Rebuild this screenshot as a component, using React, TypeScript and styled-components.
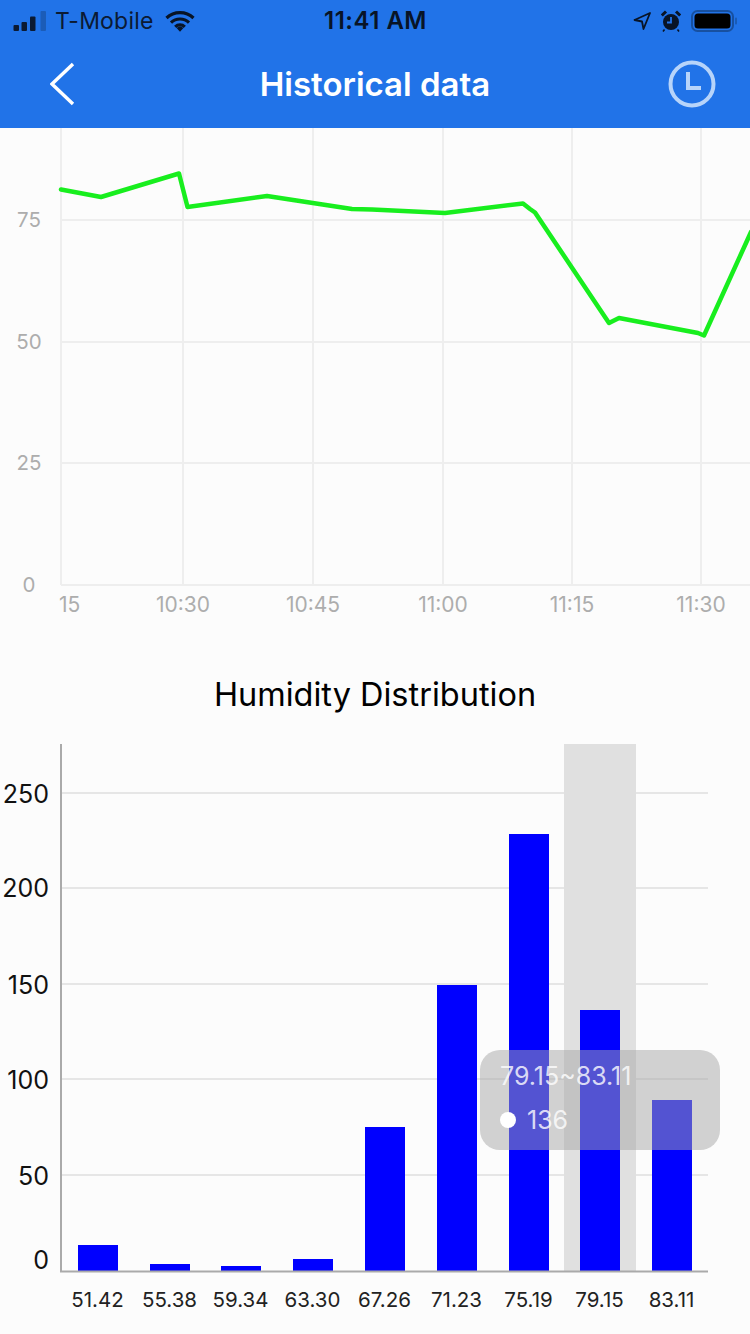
import styled, { createGlobalStyle } from "styled-components";

const GlobalStyle = createGlobalStyle`
  html, body {
    margin: 0;
    padding: 0;
    background: #fcfcfc;
    font-family: Inter, "Liberation Sans", sans-serif;
  }
`;

const lineXTicks = [
  { x: 183, label: "10:30" },
  { x: 313, label: "10:45" },
  { x: 443, label: "11:00" },
  { x: 572, label: "11:15" },
  { x: 701, label: "11:30" },
];
const lineYTicks = [
  { y: 220, label: "75" },
  { y: 342, label: "50" },
  { y: 463, label: "25" },
  { y: 585, label: "0" },
];
const linePoints =
  "61,189.5 101,197 179,173.5 187.5,207 267,196 352,209 372,209.5 445,213 523,203.5 530,209 535,212.5 609,323 619,318 698,333 704,335.5 751,232";

// the 0 label sits above its tick in the reference, hence labelY
const barYTicks = [
  { y: 793, labelY: 802.5, label: "250" },
  { y: 888, labelY: 897, label: "200" },
  { y: 984, labelY: 994, label: "150" },
  { y: 1079, labelY: 1089, label: "100" },
  { y: 1175, labelY: 1185, label: "50" },
  { y: 1271, labelY: 1269, label: "0" },
];
const bars = [
  { x: 98, top: 1245, label: "51.42" },
  { x: 170, top: 1264, label: "55.38" },
  { x: 241, top: 1266, label: "59.34" },
  { x: 313, top: 1259, label: "63.30" },
  { x: 385, top: 1127, label: "67.26" },
  { x: 457, top: 985, label: "71.23" },
  { x: 529, top: 834, label: "75.19" },
  { x: 600, top: 1010, label: "79.15" },
  { x: 672, top: 1100, label: "83.11" },
];

// chart svgs are offset so coordinates read like the page
const LINE_TOP = 128;
const BAR_TOP = 734;

const LineChart = () => (
  <ChartSvg width="750" height="512" viewBox={`0 ${LINE_TOP} 750 512`}>
    {lineYTicks.map((t) => (
      <g key={t.label}>
        <line x1="61" x2="750" y1={t.y} y2={t.y} stroke="#eeeeee" strokeWidth="2" />
        <text x="29" y={t.y + 7} fontSize="20.5" fill="#adadad" textAnchor="middle">
          {t.label}
        </text>
      </g>
    ))}
    <line x1="61" x2="61" y1={LINE_TOP} y2="585" stroke="#eeeeee" strokeWidth="2" />
    {lineXTicks.map((t) => (
      <g key={t.label}>
        <line x1={t.x} x2={t.x} y1={LINE_TOP} y2="585" stroke="#eeeeee" strokeWidth="2" />
        <text x={t.x} y="612" fontSize="21" fill="#adadad" textAnchor="middle">
          {t.label}
        </text>
      </g>
    ))}
    <text x="59" y="612" fontSize="21" fill="#adadad">
      15
    </text>
    <polyline
      points={linePoints}
      fill="none"
      stroke="#18ee1e"
      strokeWidth="4.5"
      strokeLinejoin="round"
      strokeLinecap="round"
    />
  </ChartSvg>
);

const BarChart = () => (
  <ChartSvg width="750" height="600" viewBox={`0 ${BAR_TOP} 750 600`}>
    {barYTicks.slice(0, 5).map((t) => (
      <line key={t.label} x1="61" x2="708" y1={t.y} y2={t.y} stroke="#e6e6e6" strokeWidth="2" />
    ))}
    <rect x="564" y="744" width="72" height="527" fill="#e0e0e0" />
    {bars.map((b) => (
      <g key={b.label}>
        <rect x={b.x - 20} y={b.top} width="40" height={1271 - b.top} fill="#0000ff" />
        <text x={b.x - 0.5} y="1307" fontSize="20.5" fill="#222222" textAnchor="middle">
          {b.label}
        </text>
      </g>
    ))}
    {barYTicks.map((t) => (
      <text key={t.label} x="49" y={t.labelY} fontSize="25" fill="#111111" textAnchor="end">
        {t.label}
      </text>
    ))}
    <line x1="61" x2="61" y1="744" y2="1272" stroke="#aaaaaa" strokeWidth="2" />
    <line x1="60" x2="708" y1="1271.5" y2="1271.5" stroke="#aaaaaa" strokeWidth="2" />
  </ChartSvg>
);

export default function App() {
  return (
    <Page>
      <GlobalStyle />
      <Header>
        <StatusBar>
          <StatusGroup>
            <svg width="34" height="20" viewBox="0 0 34 20">
              <rect x="0.5" y="14" width="5.5" height="6" rx="1" fill="#0b1a33" />
              <rect x="8.5" y="11" width="5.5" height="9" rx="1" fill="#0b1a33" />
              <rect x="17" y="5.5" width="5.5" height="14.5" rx="1" fill="#0b1a33" />
              <rect x="27.5" y="0" width="5.5" height="20" rx="1" fill="#1b5cb8" />
            </svg>
            <Carrier>T-Mobile</Carrier>
            <svg width="30" height="22" viewBox="0 0 30 22">
              <path
                d="M1.5 8 A19.5 19.5 0 0 1 28.5 8 M6 12.6 A13 13 0 0 1 24 12.6 M10.2 16.8 A7 7 0 0 1 19.8 16.8"
                fill="none"
                stroke="#081426"
                strokeWidth="3.2"
              />
              <path d="M11.6 18 A5 5 0 0 1 18.4 18 L15 21.8 Z" fill="#081426" />
            </svg>
          </StatusGroup>
          <StatusTime>11:41 AM</StatusTime>
          <StatusIcons>
            <svg width="18" height="18" viewBox="0 0 18 18">
              <path
                d="M17 1 L1.5 8 L9 9.5 L10.5 17 Z"
                fill="none"
                stroke="#081426"
                strokeWidth="1.8"
                strokeLinejoin="round"
              />
            </svg>
            <svg width="20" height="22" viewBox="0 0 20 22">
              <circle cx="10" cy="12" r="8" fill="#081426" />
              <path d="M0.8 5.5 L5 1.5 M19.2 5.5 L15 1.5" stroke="#081426" strokeWidth="3" />
              <path d="M3.5 19.5 L2 21.5 M16.5 19.5 L18 21.5" stroke="#081426" strokeWidth="1.6" />
              <path d="M10 7 V12.5 H6" fill="none" stroke="#2173e8" strokeWidth="1.8" />
            </svg>
            <svg width="47" height="22" viewBox="0 0 47 22">
              <rect x="1" y="1" width="41" height="20" rx="5.5" fill="none" stroke="#1750a0" strokeWidth="2" />
              <rect x="3.5" y="3.5" width="36" height="15" rx="3.5" fill="#000000" />
              <rect x="44" y="7.5" width="2" height="7" rx="1" fill="#1a5bb5" />
            </svg>
          </StatusIcons>
        </StatusBar>
        <NavBar>
          <BackIcon>
            <svg width="26" height="44" viewBox="0 0 26 44">
              <path d="M23 2 L2 22 L23 42" fill="none" stroke="#ffffff" strokeWidth="3.4" />
            </svg>
          </BackIcon>
          <NavTitle>Historical data</NavTitle>
          <HistoryIcon>
            <svg width="48" height="48" viewBox="0 0 48 48">
              <circle cx="24" cy="24" r="21.5" fill="none" stroke="#b7d4fa" strokeWidth="4" />
              <path d="M20 12 V28 H33" fill="none" stroke="#b7d4fa" strokeWidth="4" />
            </svg>
          </HistoryIcon>
        </NavBar>
      </Header>
      <LineChart />
      <ChartTitle>Humidity Distribution</ChartTitle>
      <BarSection>
        <BarChart />
        <Tooltip>
          <TooltipRange>79.15~83.11</TooltipRange>
          <TooltipValue>
            <TooltipDot />
            136
          </TooltipValue>
        </Tooltip>
      </BarSection>
    </Page>
  );
}

const Page = styled.div`
  width: 750px;
  height: 1334px;
  overflow: hidden;
  background: #fcfcfc;
`;

const Header = styled.header`
  height: 128px;
  background: #2173e8;
`;

const StatusBar = styled.div`
  height: 40px;
  padding: 1px 12px 0 13px;
  box-sizing: border-box;
  display: grid;
  grid-template-columns: 1fr auto 1fr;
  align-items: center;
  color: #0b1a33;
  font-size: 23px;
`;

const StatusGroup = styled.div`
  display: flex;
  align-items: center;
  gap: 8px;

  svg:last-child {
    margin-left: 3px;
  }
`;

const Carrier = styled.span`
  letter-spacing: 0.2px;
`;

const StatusTime = styled.span`
  font-size: 24px;
  font-weight: 600;
  letter-spacing: 0.5px;
  color: #081426;
`;

const StatusIcons = styled.div`
  display: flex;
  align-items: center;
  justify-content: flex-end;
  gap: 10px;
`;

const NavBar = styled.nav`
  height: 88px;
  padding: 0 34px;
  box-sizing: border-box;
  display: grid;
  grid-template-columns: 1fr auto 1fr;
  align-items: center;
`;

const BackIcon = styled.div`
  display: flex;
  margin-left: 16px;
`;

const HistoryIcon = styled.div`
  display: flex;
  justify-content: flex-end;
`;

const NavTitle = styled.h1`
  margin: 0;
  color: #ffffff;
  font-size: 33px;
  font-weight: 600;
`;

const ChartSvg = styled.svg`
  display: block;
  font-family: Inter, "Liberation Sans", sans-serif;
`;

const ChartTitle = styled.h2`
  margin: 0;
  height: 94px;
  line-height: 110px;
  text-align: center;
  color: #000000;
  font-size: 32.5px;
  font-weight: 400;
`;

const BarSection = styled.section`
  position: relative;
`;

const Tooltip = styled.div`
  position: absolute;
  left: 480px;
  top: 316px;
  width: 240px;
  height: 100px;
  padding: 12px 20px;
  box-sizing: border-box;
  border-radius: 20px;
  background: rgba(165, 165, 165, 0.5);
  color: rgba(255, 255, 255, 0.8);
  font-size: 25px;
`;

const TooltipRange = styled.div`
  line-height: 28px;
`;

const TooltipValue = styled.div`
  margin-top: 16px;
  line-height: 28px;
  display: flex;
  align-items: center;
  gap: 11px;
`;

const TooltipDot = styled.span`
  width: 16px;
  height: 16px;
  border-radius: 50%;
  background: #ffffff;
`;
